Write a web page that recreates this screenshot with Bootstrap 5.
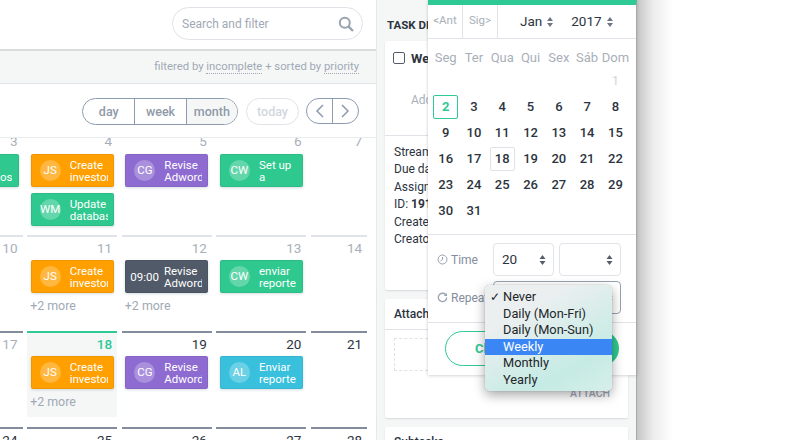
<!doctype html>
<html lang="en"><head><meta charset="utf-8">
<link href="https://cdn.jsdelivr.net/npm/bootstrap@5.3.0/dist/css/bootstrap.min.css" rel="stylesheet">
<style>
html,body{height:440px;overflow:hidden;background:#fff;font-family:Roboto,sans-serif;color:#2c3440}
.stage{width:800px;height:440px;position:relative;overflow:hidden}
.leftcol{width:376px;flex:none;height:440px;overflow:hidden;background:#fff}
.topbar{height:51px;padding:7px 13px 0 0;border-bottom:2px solid #d8dcdc;position:relative;z-index:2;background:#fff}
.searchbox{width:191px;height:33px;border:1px solid #dfe3e8;border-radius:17px;padding:0 8px 0 9px;color:#a1a9b5;font-size:12px}
.filterbar{height:33px;background:#f5f7f7;border-bottom:1px solid #dfe3e8;color:#a1a9b5;font-size:11.3px;padding-right:17px;position:relative;z-index:2}
.dotted{border-bottom:1px dotted #a1a9b5;line-height:13px;display:inline-block}
.toolbar{height:54px;padding:14px 17px 0 0;border-bottom:1px solid #e9ecef;position:relative;z-index:2;background:#fff}
.pillgroup{border:1px solid #8d9bb0;border-radius:14px;height:27px;overflow:hidden;color:#8f99a8;font-size:12.5px;font-weight:500;margin-right:8px}
.pillgroup span{width:51.3px;text-align:center;line-height:25px;border-left:1px solid #8d9bb0}
.pillgroup span:first-child{border-left:0}
.pillgroup .on{background:#f5f7f7}
.todaypill{width:53px;height:27px;border:1px solid #dfe3e8;border-radius:14px;text-align:center;line-height:25px;color:#d2d7de;font-size:12.5px;font-weight:500;margin-right:7px}
.arrowpill{width:53px;height:26px;border:1px solid #8d9bb0;border-radius:13px;overflow:hidden}
.arrowpill span{width:26px}
.arrowpill span:first-child{border-right:1px solid #8d9bb0}
.calgrid{display:grid;grid-template-columns:22.5px 90px 90px 90px 56px;column-gap:4.67px;grid-template-rows:104px 96px 96px 40px;margin-top:-7px}
.daycell{position:relative;font-size:13.5px;color:#2c3440;padding:2px 5px 0 0;text-align:right;border-top:2px solid #e0e3e8;line-height:18px}
.daycell.past{color:#a8afba}
.daycell.cur{border-top-color:#848d9d}
.daycell.noline{border-top:0;padding-top:3px;line-height:15px}
.daycell.today{border-top-color:#2ec995;background:#f5f7f7;color:#2ec995;font-weight:500;height:86px}
.evt{height:33px;margin:3px -1.5px 6px 3.5px;color:#fff;border-radius:2px;font-size:11.5px;line-height:12px;font-weight:400;text-align:left;display:flex;align-items:center;box-shadow:0 1px 3px rgba(40,60,80,.18),inset 0 0 0 1px rgba(0,0,0,.05);overflow:hidden}
.noline .evt{margin-top:5px}
.evt.or{background:#ff9f00}.evt.pu{background:#8e6bd1}.evt.gr{background:#2fc88f}.evt.bl{background:#39c0dc}.evt.dk{background:#505a68}
.evt.cutoff{margin-left:-70px;justify-content:flex-end;padding-right:7px}
.ava{width:21px;height:21px;border-radius:50%;background:rgba(255,255,255,.25);flex:none;margin:0 9px 0 9px;text-align:center;line-height:21px;font-size:11.5px}
.evttxt{width:38px;overflow:hidden;white-space:nowrap;flex:none}
.evttxt.shortie{width:12px}
.clock{margin:0 5px;font-size:11.5px}
.morelink{font-size:12.4px;color:#a1a9b5;margin:-1px 0 0 3px;text-align:left;line-height:15px;font-weight:400}
.rightcol{width:261px;flex:none;height:440px;background:#f5f7f7;border-left:1px solid #e6e9ec;border-right:1px solid #a8a8a8;padding:0 8px;overflow:hidden}
.paneltitle{font-size:11.5px;font-weight:700;color:#2c3440;height:41px;padding-top:18px;line-height:14px;padding-left:2px}
.panelcard{background:#fff;border-radius:2px;box-shadow:0 1px 2px rgba(40,60,80,.15);margin-bottom:9px;font-size:12px}
.subcard{height:40px}
.tasktop{height:95px;border-bottom:1px solid #e0e3e8;padding:8px 0 0 8px}
.chk{width:12px;height:12px;border:1.5px solid #555f6c;border-radius:2px;margin:3px -2px 0 0}
.taskname{font-size:13px}
.addnote{margin:22px 0 0 18px;color:#a8afba}
.metaline{padding:8px 0 0 9px;height:154px;line-height:17.4px;color:#2c3440}
.attachhead{height:31px;border-bottom:1px solid #e0e3e8;font-weight:500;padding:7px 0 0 9px;line-height:17px}
.attachbody{height:88px;padding:8px 0 0 9px;position:relative}
.dropzone{width:60px;height:33px;border:1px dashed #dfe3e8}
.attachlink{color:#a1a9b5;font-weight:500;font-size:10.5px;text-align:right;padding-right:18px;margin-top:15px}
.sidewhite{flex:1;background:linear-gradient(to right,#c6c6c6,#ececec 16px,#fff 36px)}
.pickerpop{position:absolute;left:428px;top:0;width:209px;height:375px;background:#fff;border-top:5px solid #2ec995;box-shadow:0 1px 3px rgba(40,50,60,.18),-1px 0 2px rgba(40,50,60,.06);border-right:1px solid #a8a8a8}
.pickhead{height:34px;border-bottom:1px solid #e0e3e8;font-size:13.5px;color:#2c3440}
.navbit{width:35px;height:33px;border-right:1px solid #e0e3e8;color:#a8afba;font-size:11.5px;text-align:center;line-height:31px}
.monthsel{margin-left:22px;line-height:31px;gap:5px}
.monthsel.yr{margin-left:18px}
.weekrow{display:grid;grid-template-columns:repeat(7,28.3px);padding:0 3.5px;justify-items:center;font-size:13px}
.weekrow.head{color:#a8afba;height:29px;padding-top:11px;line-height:16px}
.weekrow.days{height:26px;line-height:26px;font-weight:500;color:#2c3440}
.dayfirst{color:#d2d7de;font-weight:400}
.daypick{width:25px;height:24px;line-height:22px;text-align:center;border-radius:2px;margin-top:1px}
.daypick.sel{border:1px solid #2ec995;color:#2ec995;font-weight:700}
.daypick.ringed{border:1px solid #dfe3e8}
.timesec{border-top:1px solid #e0e3e8;height:88px;margin-top:10px;position:relative;padding:8px 15px 0 9px;font-size:12px;color:#848d9d}
.timelabel{width:56px;gap:3px}
.fakesel{height:33px;width:61px;border:1px solid #e0e3e8;border-radius:4px;color:#2c3440;font-size:13.5px;padding:0 7px 0 8px}
.fakesel.narrowgap{margin-left:5px;width:62px}
.fakesel.wide{width:128px;border-color:#98a2b0}
.timerow{margin-bottom:5px}
.footsec{border-top:1px solid #e0e3e8;height:48px;padding:8px 17px 0 17px;position:relative}
.closebtn{height:35px;border:1px solid #2ec995;border-radius:18px;color:#2ec995;font-weight:700;font-size:13px;width:90px;padding-left:29px;line-height:33px}
.applybtn{height:35px;width:60px;background:#2fc88f;border-radius:18px;margin-left:auto}
.nativemenu{position:absolute;left:485px;top:285px;width:127px;height:106px;border-radius:5px;background:linear-gradient(150deg,#eceff0 25%,#c5ebe4 75%,#d8eeea);box-shadow:0 4px 12px rgba(0,0,0,.35),0 0 1px rgba(0,0,0,.4);padding-top:4px;font-size:12.8px;color:#22262b;line-height:16.5px}
.nativemenu div{padding-left:18px;position:relative}
.nativemenu .hot{background:#3a86f5;color:#fff}
.checkm{position:absolute;left:5px;top:0;font-size:12px}
</style></head><body>
<div class="stage d-flex">
 <div class="leftcol">
  <div class="topbar d-flex justify-content-end">
   <div class="searchbox d-flex align-items-center justify-content-between"><span>Search and filter</span>
    <svg width="16" height="16" viewBox="0 0 16 16" fill="none" stroke="#98a2b0" stroke-width="2"><circle cx="6.8" cy="6.8" r="5"/><path d="M10.6 10.6 15 15" stroke-width="2.4"/></svg></div>
  </div>
  <div class="filterbar d-flex align-items-center justify-content-end"><span>filtered by <span class="dotted">incomplete</span> + sorted by <span class="dotted">priority</span></span></div>
  <div class="toolbar d-flex justify-content-end align-items-start">
   <div class="pillgroup d-flex"><span>day</span><span>week</span><span class="on">month</span></div>
   <div class="todaypill">today</div>
   <div class="arrowpill d-flex">
    <span class="d-flex align-items-center justify-content-center"><svg width="9" height="14" viewBox="0 0 9 14" fill="none" stroke="#8d9bb0" stroke-width="1.5"><path d="M8 1 2 7l6 6"/></svg></span>
    <span class="d-flex align-items-center justify-content-center"><svg width="9" height="14" viewBox="0 0 9 14" fill="none" stroke="#8d9bb0" stroke-width="1.5"><path d="m1 1 6 6-6 6"/></svg></span>
   </div>
  </div>
  <div class="calgrid">
   <div class="daycell past noline">3<div class="evt gr cutoff"><span class="evttxt shortie">&nbsp;<br>osa</span></div></div>
   <div class="daycell past noline">4
     <div class="evt or"><span class="ava">JS</span><span class="evttxt">Create<br>investor</span></div>
     <div class="evt gr"><span class="ava">WM</span><span class="evttxt">Update<br>database</span></div></div>
   <div class="daycell past noline">5<div class="evt pu"><span class="ava">CG</span><span class="evttxt">Revise<br>Adword</span></div></div>
   <div class="daycell past noline">6<div class="evt gr"><span class="ava">CW</span><span class="evttxt">Set up<br>a</span></div></div>
   <div class="daycell past noline">7</div>

   <div class="daycell past">10</div>
   <div class="daycell past">11<div class="evt or"><span class="ava">JS</span><span class="evttxt">Create<br>investor</span></div><div class="morelink">+2 more</div></div>
   <div class="daycell past">12<div class="evt dk"><span class="clock">09:00</span><span class="evttxt">Revise<br>Adword</span></div><div class="morelink">+2 more</div></div>
   <div class="daycell past">13<div class="evt gr"><span class="ava">CW</span><span class="evttxt">enviar<br>reporte</span></div></div>
   <div class="daycell past">14</div>

   <div class="daycell cur past">17</div>
   <div class="daycell today">18<div class="evt or"><span class="ava">JS</span><span class="evttxt">Create<br>investor</span></div><div class="morelink">+2 more</div></div>
   <div class="daycell cur">19<div class="evt pu"><span class="ava">CG</span><span class="evttxt">Revise<br>Adword</span></div></div>
   <div class="daycell cur">20<div class="evt bl"><span class="ava">AL</span><span class="evttxt">Enviar<br>reporte</span></div></div>
   <div class="daycell cur">21</div>

   <div class="daycell cur">24</div><div class="daycell cur">25</div><div class="daycell cur">26</div><div class="daycell cur">27</div><div class="daycell cur">28</div>
  </div>
 </div>
 <div class="rightcol">
  <div class="paneltitle">TASK DETAILS</div>
  <div class="panelcard">
   <div class="tasktop"><div class="d-flex gap-2"><div class="chk"></div><strong class="taskname">Weekly</strong></div><div class="addnote">Add</div></div>
   <div class="metaline">Stream<br>Due date<br>Assigned<br>ID: <b>191</b><br>Created<br>Creator</div>
  </div>
  <div class="panelcard"><div class="attachhead">Attachments</div><div class="attachbody"><div class="dropzone"></div><div class="attachlink">ATTACH</div></div></div>
  <div class="panelcard subcard"><div class="attachhead">Subtasks</div></div>
 </div>
 <div class="sidewhite"></div>

 <div class="pickerpop">
  <div class="pickhead d-flex">
   <div class="navbit">&lt;Ant</div><div class="navbit">Sig&gt;</div>
   <div class="monthsel d-flex align-items-center"><span>Jan</span><svg width="6" height="12" viewBox="0 0 6 12" fill="#6c7684"><path d="M3 1 6 5H0zM3 11 0 7h6z"/></svg></div>
   <div class="monthsel yr d-flex align-items-center"><span>2017</span><svg width="6" height="12" viewBox="0 0 6 12" fill="#6c7684"><path d="M3 1 6 5H0zM3 11 0 7h6z"/></svg></div>
  </div>
  <div class="weekrow head"><span>Seg</span><span>Ter</span><span>Qua</span><span>Qui</span><span>Sex</span><span>Sáb</span><span>Dom</span></div>
  <div class="weekrow days"><span></span><span></span><span></span><span></span><span></span><span></span><span class="dayfirst">1</span></div>
  <div class="weekrow days"><span class="daypick sel">2</span><span>3</span><span>4</span><span>5</span><span>6</span><span>7</span><span>8</span></div>
  <div class="weekrow days"><span>9</span><span>10</span><span>11</span><span>12</span><span>13</span><span>14</span><span>15</span></div>
  <div class="weekrow days"><span>16</span><span>17</span><span class="daypick ringed">18</span><span>19</span><span>20</span><span>21</span><span>22</span></div>
  <div class="weekrow days"><span>23</span><span>24</span><span>25</span><span>26</span><span>27</span><span>28</span><span>29</span></div>
  <div class="weekrow days"><span>30</span><span>31</span><span></span><span></span><span></span><span></span><span></span></div>
  <div class="timesec">
   <div class="d-flex align-items-center timerow">
    <div class="timelabel d-flex align-items-center"><svg width="11" height="11" viewBox="0 0 11 11" fill="none" stroke="#98a2b0"><circle cx="5.5" cy="5.5" r="4.5"/><path d="M5.5 3v2.5L3.5 7"/></svg><span>Time</span></div>
    <div class="fakesel d-flex align-items-center justify-content-between"><span>20</span><svg width="7" height="12" viewBox="0 0 6 12" fill="#555f6c"><path d="M3 1 6 5H0zM3 11 0 7h6z"/></svg></div>
    <div class="fakesel narrowgap d-flex align-items-center justify-content-end"><svg width="7" height="12" viewBox="0 0 6 12" fill="#555f6c"><path d="M3 1 6 5H0zM3 11 0 7h6z"/></svg></div>
   </div>
   <div class="d-flex align-items-center">
    <div class="timelabel d-flex align-items-center"><svg width="11" height="11" viewBox="0 0 11 11" fill="none" stroke="#98a2b0" stroke-width="1.3"><path d="M9.7 5.5a4.2 4.2 0 1 1-1.2-3"/><path d="M10 .8v3.2H6.8z" fill="#98a2b0" stroke="none"/></svg><span>Repeat</span></div>
    <div class="fakesel wide d-flex align-items-center justify-content-end"><svg width="7" height="12" viewBox="0 0 6 12" fill="#222"><path d="M3 1 6 5H0zM3 11 0 7h6z"/></svg></div>
   </div>
  </div>
  <div class="footsec d-flex"><div class="closebtn">Close</div><div class="applybtn"></div></div>
 </div>
 <div class="nativemenu">
  <div><span class="checkm">✓</span>Never</div><div>Daily (Mon-Fri)</div><div>Daily (Mon-Sun)</div><div class="hot">Weekly</div><div>Monthly</div><div>Yearly</div>
 </div>
</div>
</body></html>
